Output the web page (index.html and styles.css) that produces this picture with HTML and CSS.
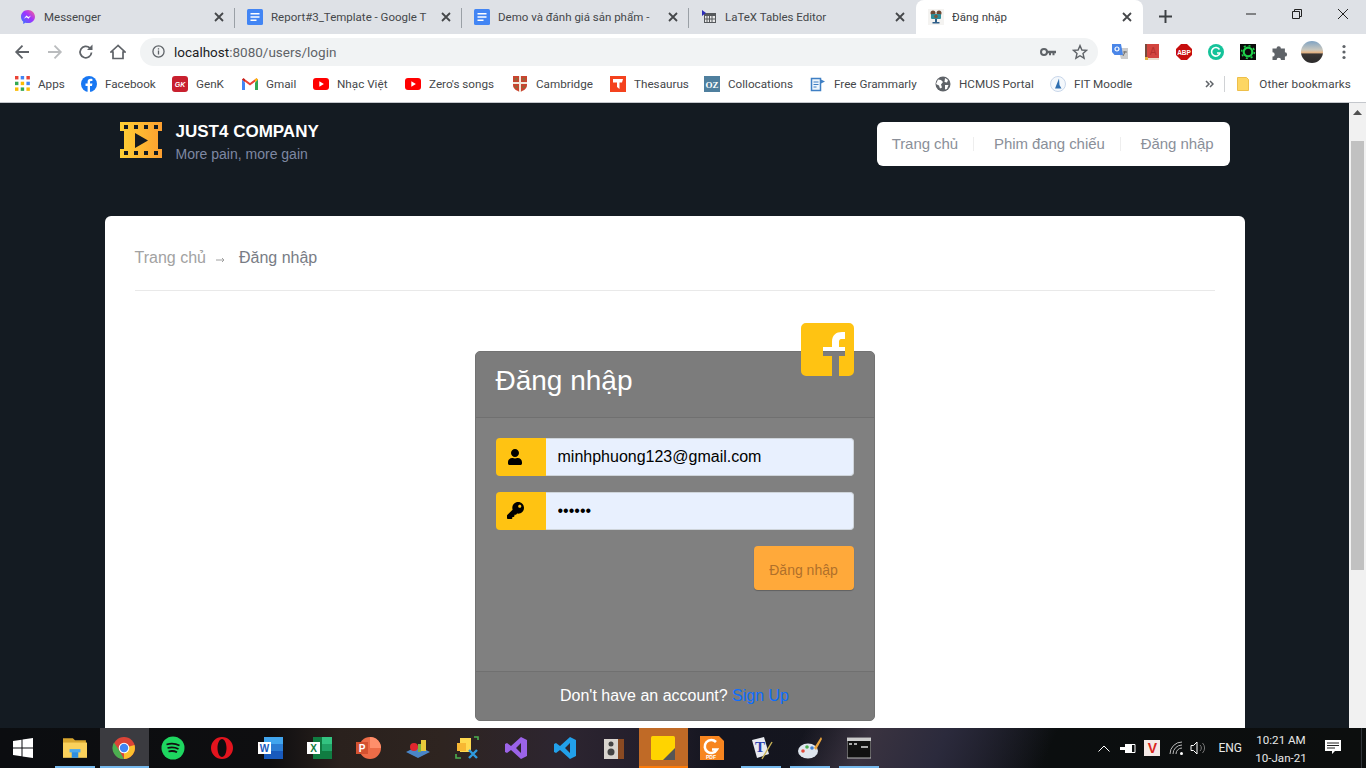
FILE: index.html
```html
<!DOCTYPE html>
<html>
  <head>
    <meta charset="UTF-8">
    <title>Đăng nhập</title>
    <link rel="stylesheet" href="styles.css">
  </head>
  <body>
    <svg class="defs" width="0" height="0">
      <symbol id="docs" viewBox="0 0 16 16">
        <rect width="16" height="16" rx="1.5" fill="#4285f4"/>
        <path d="M3.5 4h9v1.6h-9zM3.5 7.2h9v1.6h-9zM3.5 10.4h6v1.6h-6z" fill="#fff"/>
      </symbol>
      <symbol id="yt" viewBox="0 0 16 12">
        <rect width="16" height="12" rx="3" fill="#f00"/>
        <path d="M6.3 3.3l4.6 2.7-4.6 2.7z" fill="#fff"/>
      </symbol>
      <symbol id="close" viewBox="0 0 10 10">
        <path d="M1 1l8 8M9 1l-8 8" stroke="#45474a" stroke-width="1.8" fill="none"/>
      </symbol>
    </svg>

    <div class="tabstrip">
      <div class="tab">
        <svg class="favicon" viewBox="0 0 16 16"><defs><linearGradient id="msg" x1="0" y1="1" x2="1" y2="0"><stop offset="0" stop-color="#2f7bff"/><stop offset=".55" stop-color="#a033ff"/><stop offset="1" stop-color="#ff6a8a"/></linearGradient></defs><path d="M8 1C4 1 1 3.900 1 7.700c0 2 .8 3.700 2.200 4.900V15l2.200-1.200c.8.200 1.700.300 2.600.300 4 0 7-2.900 7-6.400S12 1 8 1z" fill="url(#msg)"/><path d="M3.800 9.800l2.600-3.300 2 1.500 2.700-1.500-2.600 3.300-2-1.500z" fill="#fff"/></svg>
        <span class="tab-title">Messenger</span>
        <svg class="tab-close"><use href="#close"/></svg>
      </div>
      <div class="tab">
        <svg class="favicon"><use href="#docs"/></svg>
        <span class="tab-title">Report#3_Template - Google T</span>
        <svg class="tab-close"><use href="#close"/></svg>
      </div>
      <div class="tab">
        <svg class="favicon"><use href="#docs"/></svg>
        <span class="tab-title">Demo và đánh giá sản phẩm -</span>
        <svg class="tab-close"><use href="#close"/></svg>
      </div>
      <div class="tab tab-last">
        <svg class="favicon" viewBox="0 0 16 16"><path d="M3 4h12v10H3z" fill="#55585c"/><path d="M4 7h10v6H4z" fill="#e8e8e8"/><path d="M6 7v6M8.500 7v6M11 7v6M4 10h10" stroke="#55585c"/><path d="M1 1l4 3-4 3z" fill="#2b2bb8"/></svg>
        <span class="tab-title">LaTeX Tables Editor</span>
        <svg class="tab-close"><use href="#close"/></svg>
      </div>
      <div class="tab tab-active">
        <svg class="favicon" viewBox="0 0 16 16"><rect width="16" height="16" fill="#f4f3f1"/><circle cx="5" cy="4" r="2.500" fill="#6e4a35"/><circle cx="11" cy="4" r="2.500" fill="#6e4a35"/><rect x="3" y="5" width="10" height="5" rx="1" fill="#2f8d9a"/><circle cx="8" cy="7.500" r="1.800" fill="#7a5a3c"/><path d="M7 10h2v3H7zM4.500 13h7v1.500h-7z" fill="#2f5f8a"/></svg>
        <span class="tab-title">Đăng nhập</span>
        <svg class="tab-close"><use href="#close"/></svg>
      </div>
      <svg class="new-tab" viewBox="0 0 12 12"><path d="M6 0v12M0 6h12" stroke="#3c4043" stroke-width="1.800"/></svg>
      <div class="win-controls">
        <div class="win-btn"><svg width="10" height="10"><path d="M0 5h10" stroke="#222"/></svg></div>
        <div class="win-btn"><svg width="10" height="10"><path d="M.5 2.500h7v7h-7zM2.500 2.500v-2h7v7h-2" stroke="#222" fill="none"/></svg></div>
        <div class="win-btn"><svg width="10" height="10"><path d="M0 0l10 10M10 0L0 10" stroke="#222"/></svg></div>
      </div>
    </div>

    <div class="toolbar">
      <svg class="nav-icon nav-back" viewBox="0 0 16 16"><path d="M15 8H2.500M8.500 1.700L2.200 8l6.300 6.300" stroke="#5f6368" stroke-width="1.800" fill="none"/></svg>
      <svg class="nav-icon nav-forward" viewBox="0 0 16 16"><path d="M1 8h12.500M7.500 1.700L13.800 8l-6.300 6.300" stroke="#babcbe" stroke-width="1.800" fill="none"/></svg>
      <svg class="nav-icon nav-reload" viewBox="0 0 16 16"><path d="M13.500 8.500A5.700 5.700 0 1 1 11.800 4" stroke="#5f6368" stroke-width="1.800" fill="none"/><path d="M9 6h5.500V.5z" fill="#5f6368"/></svg>
      <svg class="nav-icon nav-home" viewBox="0 0 16 16"><path d="M8 1.500L1 8h2v6.500h10V8h2z" stroke="#5f6368" stroke-width="1.700" fill="none"/></svg>
      <div class="omnibox">
        <svg class="omni-info" viewBox="0 0 14 14"><circle cx="7" cy="7" r="6" stroke="#5f6368" stroke-width="1.400" fill="none"/><path d="M6.300 6h1.400v4.300H6.300zM6.300 3.500h1.400v1.400H6.300z" fill="#5f6368"/></svg>
        <span class="url"><span class="url-host">localhost</span>:8080/users/login</span>
        <svg class="omni-key" viewBox="0 0 16 10"><circle cx="4" cy="5" r="3" stroke="#5f6368" stroke-width="2" fill="none"/><path d="M7 3.800h9v2.400h-1.500v2h-2v-2H11v2H9v-2H7z" fill="#5f6368"/></svg>
        <svg class="omni-star" viewBox="0 0 16 16"><path d="M8 1.600l1.900 4.400 4.700.4-3.600 3.100 1.100 4.700L8 11.700l-4.100 2.500L5 9.500 1.400 6.400l4.700-.4z" stroke="#5f6368" stroke-width="1.400" fill="none"/></svg>
      </div>
      <div class="extensions">
        <svg class="ext" viewBox="0 0 16 16"><path d="M6 4h10v11H9z" fill="#ccc"/><path d="M0 0h9l2 11H2.500L0 8z" fill="#4a86e8"/><circle cx="5" cy="5" r="2" stroke="#fff" stroke-width="1.200" fill="none"/><path d="M11 8h4M13 7v1l-2 4" stroke="#777"/></svg>
        <svg class="ext" viewBox="0 0 16 16"><path d="M1 0h14v14H1z" fill="#d2453f"/><path d="M1 14h14v2H1z" fill="#eadfce"/><path d="M1 0h2v14H1z" fill="#7a4a3c"/><path d="M1 13h3v3H1z" fill="#e3b341"/><text x="9" y="10.500" class="book-letter">A</text></svg>
        <svg class="ext" viewBox="0 0 16 16"><path d="M5 0h6l5 5v6l-5 5H5l-5-5V5z" fill="#c70d0d"/><text x="8" y="10.600" class="abp">ABP</text></svg>
        <svg class="ext" viewBox="0 0 16 16"><circle cx="8" cy="8" r="8" fill="#15c39a"/><path d="M11.500 5.500a4.300 4.300 0 1 0 .5 3.500H9" stroke="#fff" stroke-width="1.600" fill="none"/></svg>
        <svg class="ext" viewBox="0 0 16 16"><rect width="16" height="16" fill="#0b0b0b"/><circle cx="8" cy="8" r="4.300" stroke="#1fd14a" stroke-width="2.200" fill="none"/><circle cx="8" cy="8" r="6.400" stroke="#1fd14a" stroke-width="1.500" stroke-dasharray="2 3" fill="none"/></svg>
        <svg class="ext" viewBox="0 0 16 16"><path d="M.5 4.500h4a2.200 2.200 0 1 1 4.400 0h4v3.700a2.200 2.200 0 1 1 0 4.400V16H9a2.200 2.200 0 1 0-4.400 0H.5v-3.400a2.200 2.200 0 1 0 0-4.400z" fill="#5f6368"/></svg>
        <div class="avatar"></div>
        <svg class="ext-menu" viewBox="0 0 4 16"><circle cx="2" cy="2.500" r="1.600" fill="#5f6368"/><circle cx="2" cy="8" r="1.600" fill="#5f6368"/><circle cx="2" cy="13.500" r="1.600" fill="#5f6368"/></svg>
      </div>
    </div>

    <div class="bookmarks">
      <div class="bookmark w-apps">
        <svg class="mark" viewBox="0 0 14 14"><path d="M0 0h3v3H0z" fill="#ea4335"/><path d="M5 0h3v3H5z" fill="#4285f4"/><path d="M10 0h3v3h-3z" fill="#ea4335"/><path d="M0 5h3v3H0z" fill="#34a853"/><path d="M5 5h3v3H5z" fill="#fbbc05"/><path d="M10 5h3v3h-3z" fill="#4285f4"/><path d="M0 10h3v3H0z" fill="#fbbc05"/><path d="M5 10h3v3H5z" fill="#34a853"/><path d="M10 10h3v3h-3z" fill="#fbbc05"/></svg>
        <span class="apps-label">Apps</span>
      </div>
      <div class="bookmark w-fb">
        <svg class="mark" viewBox="0 0 16 16"><circle cx="8" cy="8" r="8" fill="#1877f2"/><path d="M9 16v-6h2l.4-2.400H9V6.200c0-.8.300-1.200 1.200-1.200h1.200V3c-.5-.1-1.100-.2-1.700-.2-1.900 0-3.100 1.100-3.100 3.200v1.600H4.500V10h2.100v6z" fill="#fff"/></svg>
        <span>Facebook</span>
      </div>
      <div class="bookmark w-genk">
        <svg class="mark" viewBox="0 0 16 16"><rect width="16" height="16" rx="3" fill="#c8202f"/><text x="8" y="10.500" class="genk">GK</text></svg>
        <span>GenK</span>
      </div>
      <div class="bookmark w-gmail">
        <svg class="mark" viewBox="0 0 16 12"><path d="M0 1.500V12h3V4.500z" fill="#4285f4"/><path d="M13 4.500V12h3V1.500z" fill="#34a853"/><path d="M0 1.500L8 7.500l8-6L14.500.2 8 5 1.500.2z" fill="#ea4335"/><path d="M0 1.500L3 4V1.200L1.500.2z" fill="#c5221f"/><path d="M13 1.200V4l3-2.500L14.500.2z" fill="#fbbc05"/></svg>
        <span>Gmail</span>
      </div>
      <div class="bookmark w-nhac">
        <svg class="mark"><use href="#yt"/></svg>
        <span>Nhạc Việt</span>
      </div>
      <div class="bookmark w-zero">
        <svg class="mark"><use href="#yt"/></svg>
        <span>Zero's songs</span>
      </div>
      <div class="bookmark w-camb">
        <svg class="mark" viewBox="0 0 14 16"><path d="M0 0h14v9c0 4-3.500 5.500-7 7-3.500-1.500-7-3-7-7z" fill="#c8452f"/><path d="M6 0h2v16H6zM0 6h14v2H0z" fill="#f2e8dc"/><path d="M2 2h2.500v2.500H2zM9.500 2H12v2.500H9.500zM2 10h2.500v2H2zM9.500 10H12v2H9.500z" fill="#8c6a3c"/></svg>
        <span>Cambridge</span>
      </div>
      <div class="bookmark w-thes">
        <svg class="mark" viewBox="0 0 16 16"><rect width="16" height="16" fill="#f4421e"/><path d="M3 3h10l-1 3.500H9.500V13L7 11V6.500H3z" fill="#fff"/></svg>
        <span>Thesaurus</span>
      </div>
      <div class="bookmark w-coll">
        <svg class="mark" viewBox="0 0 16 16"><rect width="16" height="16" fill="#4f7f9e"/><text x="8" y="11.500" class="oz">OZ</text></svg>
        <span>Collocations</span>
      </div>
      <div class="bookmark w-gram">
        <svg class="mark" viewBox="0 0 16 16"><path d="M1.500 2.500h9v12h-9z" stroke="#3f7fc4" stroke-width="1.500" fill="#eef5fb"/><path d="M3.500 6h5M3.500 8.500h5M3.500 11h3" stroke="#3f7fc4" stroke-width="1.200"/><path d="M10 3l5 2.500-5 2.500z" fill="#3f7fc4"/></svg>
        <span>Free Grammarly</span>
      </div>
      <div class="bookmark w-hcmus">
        <svg class="mark" viewBox="0 0 16 16"><circle cx="8" cy="8" r="7.500" fill="#5f6368"/><path d="M3 3.500l3 .5 2 2-2 2.500 1 3-2 1-1-3-3-1.500zM10 2l3 2-1 2.500-2.500-.5zM10 9h3.500l-1.500 4-2 .5z" fill="#fff"/></svg>
        <span>HCMUS Portal</span>
      </div>
      <div class="bookmark">
        <svg class="mark" viewBox="0 0 16 16"><circle cx="8" cy="8" r="7.500" stroke="#c9d7ea" fill="#f4f8fc"/><path d="M9 2.500L5 12.500h6.500L9.500 9z" fill="#2f6fb0"/></svg>
        <span>FIT Moodle</span>
      </div>
      <div class="bookmarks-end">
        <svg class="chevrons" viewBox="0 0 9 8"><path d="M1 1l3 3-3 3M5 1l3 3-3 3" stroke="#5f6368" stroke-width="1.500" fill="none"/></svg>
        <div class="bm-sep"></div>
        <svg class="folder" viewBox="0 0 12 14"><path d="M.5.500h9l2 2v11H.5z" fill="#fdd663" stroke="#eebf4a"/></svg>
        <span class="other-label">Other bookmarks</span>
      </div>
    </div>

    <div class="viewport">
      <div class="page">
        <div class="container">
          <header class="site-header">
            <div class="brand">
              <svg class="brand-logo" viewBox="0 0 42 36">
                <defs><linearGradient id="film"><stop offset="0" stop-color="#ffd034"/><stop offset="1" stop-color="#fd9f30"/></linearGradient></defs>
                <path fill="url(#film)" fill-rule="evenodd" d="M0 0h42v9h-4v18h4v9H0v-9h4V9H0zM4 3v4h4V3zM14 3v4h4V3zM24 3v4h4V3zM34 3v4h4V3zM4 29v4h4v-4zM14 29v4h4v-4zM24 29v4h4v-4zM34 29v4h4v-4zM15 11v15l13-7.500z"/>
              </svg>
              <div class="brand-text">
                <div class="brand-name">JUST4 COMPANY</div>
                <div class="brand-slogan">More pain, more gain</div>
              </div>
            </div>
            <nav class="site-nav">
              <a class="nav-link">Trang chủ</a>
              <a class="nav-link">Phim đang chiếu</a>
              <a class="nav-link">Đăng nhập</a>
            </nav>
          </header>

          <main class="content">
            <div class="breadcrumb">
              <span class="crumb">Trang chủ</span>
              <svg class="crumb-arrow" viewBox="0 0 9 6"><path d="M0 3h8M6 1l2 2-2 2" stroke="#a0a0a0" fill="none"/></svg>
              <span class="crumb-current">Đăng nhập</span>
            </div>

            <div class="login-card">
              <svg class="fb-square" viewBox="0 0 53 53"><path fill="#ffc312" fill-rule="evenodd" d="M5 0h43a5 5 0 0 1 5 5v43a5 5 0 0 1-5 5H38V33h6V24h-6v-4c0-2 0-4 3-4h3V9h-3c-6 0-10 3-10 10v5h-9v9h9v20H5a5 5 0 0 1-5-5V5a5 5 0 0 1 5-5z"/></svg>
              <div class="login-header">
                <h3 class="login-title">Đăng nhập</h3>
              </div>
              <div class="login-body">
                <div class="input-row">
                  <div class="input-icon">
                    <svg class="icon-user" viewBox="0 0 448 512"><path d="M224 256c70.700 0 128-57.300 128-128S294.700 0 224 0 96 57.300 96 128s57.300 128 128 128zm89.600 32h-16.700c-22.200 10.200-46.900 16-72.900 16s-50.600-5.800-72.900-16h-16.700C60.200 288 0 348.200 0 422.400V464c0 26.500 21.500 48 48 48h352c26.500 0 48-21.500 48-48v-41.600c0-74.200-60.200-134.400-134.400-134.400z"/></svg>
                  </div>
                  <input class="input" type="text" value="minhphuong123@gmail.com">
                </div>
                <div class="input-row">
                  <div class="input-icon">
                    <svg class="icon-key" viewBox="0 0 512 512"><path d="M512 176c0 97.200-78.800 176-176 176-11.200 0-22.200-1.100-32.800-3.100l-24 27A24 24 0 0 1 261.200 384H224v40c0 13.300-10.700 24-24 24h-40v40c0 13.300-10.700 24-24 24H24c-13.300 0-24-10.700-24-24v-78.100c0-6.300 2.500-12.400 7-16.900l161.800-161.800C163.100 213.800 160 195.300 160 176 160 78.800 238.800 0 336 0c97.500 0 176 78.500 176 176zM336 128c0 26.500 21.500 48 48 48s48-21.500 48-48-21.500-48-48-48-48 21.500-48 48z"/></svg>
                  </div>
                  <input class="input" type="password" value="123456">
                </div>
                <div class="login-actions">
                  <button class="login-btn">Đăng nhập</button>
                </div>
              </div>
              <div class="login-footer">Don't have an account? <a class="signup">Sign Up</a></div>
            </div>
          </main>
        </div>
      </div>
      <div class="scrollbar">
        <svg class="scroll-up" viewBox="0 0 9 5"><path d="M0 5l4.500-5L9 5z" fill="#505050"/></svg>
        <div class="scroll-thumb"></div>
      </div>
    </div>

    <div class="taskbar">
      <div class="start">
        <svg viewBox="0 0 20 20" width="20" height="20"><path d="M0 3l8.500-1.200V9.500H0zM9.500 1.600L20 0v9.500H9.500zM0 10.500h8.500v7.700L0 17zM9.500 10.500H20V20L9.500 18.400z" fill="#fff"/></svg>
      </div>
      <div class="slot slot-open">
        <svg viewBox="0 0 22 20" class="task-icon"><path d="M0 1h9l2 2h10v4H0z" fill="#d9a62e"/><path d="M0 5h22v14H0z" fill="#fbd15b"/><path d="M8 13h6v6H8z" fill="#2f8fe0"/><path d="M6 11h10v3H6z" fill="#4aa8ee"/></svg>
      </div>
      <div class="slot slot-active">
        <svg viewBox="0 0 24 24" class="task-icon"><circle cx="12" cy="12" r="11" fill="#db4437"/><path d="M12 12L22.500 9A11 11 0 0 1 12 23z" fill="#fbc02d"/><path d="M12 23A11 11 0 0 1 2 6.500L7 14z" fill="#4caf50"/><circle cx="12" cy="12" r="5.300" fill="#fff"/><circle cx="12" cy="12" r="4.200" fill="#4285f4"/></svg>
      </div>
      <div class="slot">
        <svg viewBox="0 0 24 24" class="task-icon"><circle cx="12" cy="12" r="11.500" fill="#1ed760"/><path d="M5.500 8.500c4.500-1.300 9-1 13 1M6.500 12c3.800-1 7.500-.8 11 1M7.500 15.500c3-.8 6-.6 8.500.8" stroke="#111" stroke-width="1.800" fill="none"/></svg>
      </div>
      <div class="slot">
        <svg viewBox="0 0 24 24" class="task-icon"><path fill="#e3141e" fill-rule="evenodd" d="M12 1a11 11 0 1 1 0 22 11 11 0 0 1 0-22zM12 3c-2.500 0-4.500 4-4.500 9s2 9 4.500 9 4.500-4 4.500-9-2-9-4.500-9z"/></svg>
      </div>
      <div class="slot">
        <svg viewBox="0 0 26 22" class="task-icon-wide"><path d="M6 0h19v22H6z" fill="#185abd"/><path d="M6 0h19v7H6z" fill="#41a5ee"/><path d="M6 7h19v7H6z" fill="#2b7cd3"/><rect y="5" width="13" height="12" fill="#fff"/><text x="6.500" y="14.500" class="doc-letter word">W</text></svg>
      </div>
      <div class="slot">
        <svg viewBox="0 0 26 22" class="task-icon-wide"><path d="M6 0h19v22H6z" fill="#107c41"/><path d="M15 0h10v7H15z" fill="#33c481"/><path d="M15 7h10v7H15z" fill="#21a366"/><rect y="5" width="13" height="12" fill="#fff"/><text x="6.500" y="14.500" class="doc-letter excel">X</text></svg>
      </div>
      <div class="slot">
        <svg viewBox="0 0 26 22" class="task-icon-wide"><circle cx="14" cy="11" r="11" fill="#ed6c47"/><path d="M14 0a11 11 0 0 1 11 11H14z" fill="#ff8f6b"/><rect y="5" width="12" height="12" fill="#d35230"/><text x="6" y="14.500" class="doc-letter ppt">P</text></svg>
      </div>
      <div class="slot">
        <svg viewBox="0 0 24 22" class="task-icon"><path d="M0 15l12-6 12 6-12 6z" fill="#4a86c8"/><circle cx="8" cy="10" r="4" fill="#e0262e"/><path d="M15 3h5v11h-5z" fill="#e8c93a"/><path d="M12 7h3v8h-3z" fill="#7cb342"/></svg>
      </div>
      <div class="slot">
        <svg viewBox="0 0 24 24" class="task-icon"><path d="M5 2h11v14H5z" fill="#ffd94f"/><path d="M2 7h9v8H2z" fill="#f7b733"/><path d="M14 14l8 8M22 14l-8 8" stroke="#2f9be0" stroke-width="2.400"/><path d="M1 18v4h5M23 4V1h-4" stroke="#4caf50" stroke-width="1.600" fill="none"/></svg>
      </div>
      <div class="slot">
        <svg viewBox="0 0 24 24" class="task-icon"><path d="M17 1l6 3v16l-6 3-10-9-4 3-2-1V8l2-1 4 3zM17 7l-5 5 5 5z" fill="#9b63e8" fill-rule="evenodd"/></svg>
      </div>
      <div class="slot">
        <svg viewBox="0 0 24 24" class="task-icon"><path d="M17 1l6 3v16l-6 3-10-9-4 3-2-1V8l2-1 4 3zM17 7l-5 5 5 5z" fill="#22a0ea" fill-rule="evenodd"/></svg>
      </div>
      <div class="slot">
        <svg viewBox="0 0 20 24" class="task-icon"><path d="M0 3h14v20H0z" fill="#d9d5cf"/><path d="M14 3h6v20h-6z" fill="#8a4a22"/><circle cx="7" cy="8" r="2.500" fill="#444"/><circle cx="7" cy="16" r="3.500" fill="#444"/></svg>
      </div>
      <div class="slot slot-sticky">
        <svg viewBox="0 0 22 22" class="task-icon"><rect width="22" height="22" rx="1.500" fill="#ffd400"/><path d="M22 11v11H11z" fill="#555"/></svg>
      </div>
      <div class="slot">
        <svg viewBox="0 0 24 24" class="task-icon"><path d="M0 0h19l5 5v19H0z" fill="#f7851f"/><path d="M16 6a6.500 6.500 0 1 0 1 7.500H12" stroke="#fff" stroke-width="2.600" fill="none"/><text x="11" y="23" class="foxit">PDF</text></svg>
      </div>
      <div class="slot">
        <svg viewBox="0 0 24 24" class="task-icon"><path d="M3 4l12-3 5 17-12 4z" fill="#e8eaf0"/><text x="11" y="16" class="tex-letter">T</text><path d="M23 6L13 23" stroke="#c9b458" stroke-width="1.400"/></svg>
      </div>
      <div class="slot">
        <svg viewBox="0 0 24 24" class="task-icon"><ellipse cx="10" cy="15" rx="10" ry="7.500" fill="#dfe6ee"/><circle cx="5" cy="15" r="1.800" fill="#e14b3b"/><circle cx="9" cy="11" r="1.800" fill="#4caf50"/><circle cx="14" cy="12" r="1.800" fill="#3f7fd0"/><path d="M23 1l-7 11 2 2 6-11z" fill="#e8a33d"/></svg>
      </div>
      <div class="slot">
        <svg viewBox="0 0 24 20" class="task-icon"><rect width="24" height="20" fill="#111" stroke="#bbb"/><path d="M0 0h24v3H0z" fill="#ccc"/><path d="M2 6h3M7 6h3M14 9h7" stroke="#ddd" stroke-width="1.400"/></svg>
      </div>

      <div class="tray">
        <svg class="tray-caret" viewBox="0 0 12 7"><path d="M.5 6.500L6 1l5.500 5.500" stroke="#fff" fill="none"/></svg>
        <svg class="tray-battery" viewBox="0 0 16 11"><path d="M5 1.500h10v8H5" stroke="#fff" fill="none"/><path d="M5 2h7v7H5zM0 4h5v3H0z" fill="#fff"/></svg>
        <div class="tray-v">V</div>
        <svg class="tray-wifi" viewBox="0 0 16 14"><path d="M1 13a12 12 0 0 1 12-12M4 13a9 9 0 0 1 9-9M7 13a6 6 0 0 1 6-6" stroke="#bbb" fill="none"/><circle cx="12.500" cy="12.500" r="1.500" fill="#fff"/></svg>
        <svg class="tray-volume" viewBox="0 0 17 14"><path d="M1 4.500h2.500L7 1v12L3.500 9.500H1z" stroke="#fff" fill="none"/><path d="M10 4a4 4 0 0 1 0 6M12.500 2a7 7 0 0 1 0 10" stroke="#777" fill="none"/></svg>
        <div class="tray-lang">ENG</div>
        <div class="clock">
          <div>10:21 AM</div>
          <div>10-Jan-21</div>
        </div>
        <svg class="tray-notif" viewBox="0 0 16 16"><path d="M0 0h16v11h-6l-3 3v-3H0z" fill="#fff"/><path d="M2 3h12M2 5.500h12M2 8h8" stroke="#222"/></svg>
        <div class="show-desktop"></div>
      </div>
    </div>
  </body>
</html>
```

FILE: styles.css
```css
* {
  box-sizing: border-box;
}

html, body {
  height: 100%;
}

body {
  margin: 0;
  display: flex;
  flex-direction: column;
  overflow: hidden;
  font-family: 'Liberation Sans', Arial, sans-serif;
}

.defs {
  display: none;
}

/* browser chrome */
.tabstrip {
  display: flex;
  flex: none;
  height: 34px;
  padding-left: 8px;
  background: #dee1e6;
  font-family: Roboto, 'Noto Sans', sans-serif;
  font-size: 11.500px;
  color: #45474a;
}

.tab {
  position: relative;
  display: flex;
  align-items: center;
  width: 227px;
  padding-left: 12px;
}

.tab::after {
  content: "";
  position: absolute;
  right: 0;
  top: 8px;
  height: 20px;
  width: 1px;
  background: #9aa0a6;
}

.tab-last::after, .tab-active::after {
  display: none;
}

.tab-active {
  background: #fff;
  border-radius: 8px 8px 0 0;
  color: #3c4043;
}

.favicon {
  width: 16px;
  height: 16px;
  flex: none;
}

.tab-title {
  width: 160px;
  margin-left: 8px;
  white-space: nowrap;
  overflow: hidden;
}

.tab-close {
  width: 10px;
  height: 10px;
  margin-left: 10px;
  flex: none;
}

.new-tab {
  width: 13px;
  height: 13px;
  margin: 10px 0 0 16px;
}

.win-controls {
  display: flex;
  margin-left: auto;
}

.win-btn {
  display: flex;
  align-items: center;
  justify-content: center;
  width: 46px;
  height: 28px;
}

.toolbar {
  display: flex;
  align-items: center;
  flex: none;
  height: 35px;
  background: #fff;
}

.nav-icon {
  width: 16px;
  height: 16px;
  flex: none;
}

.nav-back {
  margin-left: 14px;
}

.nav-forward {
  margin-left: 17px;
}

.nav-reload {
  margin-left: 15px;
}

.nav-home {
  margin-left: 16px;
}

.omnibox {
  display: flex;
  align-items: center;
  width: 958px;
  height: 28px;
  margin-left: 14px;
  padding: 0 10px 0 12px;
  background: #f1f3f4;
  border-radius: 14px;
}

.omni-info {
  width: 13px;
  height: 13px;
}

.url {
  margin-left: 9px;
  font-family: Roboto, 'Noto Sans', sans-serif;
  font-size: 13.500px;
  color: #5f6368;
}

.url-host {
  color: #202124;
}

.omni-key {
  width: 16px;
  height: 10px;
  margin-left: auto;
}

.omni-star {
  width: 16px;
  height: 16px;
  margin-left: 16px;
}

.extensions {
  display: flex;
  align-items: center;
  margin-left: 14px;
}

.ext {
  width: 16px;
  height: 16px;
  margin-right: 16px;
}

.avatar {
  width: 22px;
  height: 22px;
  margin-left: -3px;
  border-radius: 50%;
  background: linear-gradient(#7fa3c4 0, #c9c7bd 40%, #e9b98a 52%, #3a3634 60%, #2b2a2b 100%);
}

.ext-menu {
  width: 4px;
  height: 16px;
  margin-left: 19px;
}

.abp {
  font-family: 'Liberation Sans', sans-serif;
  font-size: 6.500px;
  font-weight: bold;
  fill: #fff;
  text-anchor: middle;
}

.book-letter {
  font-family: 'Liberation Sans', sans-serif;
  font-size: 10px;
  fill: #b5322d;
  text-anchor: middle;
}

.genk {
  font-family: 'Liberation Sans', sans-serif;
  font-size: 7px;
  font-weight: bold;
  font-style: italic;
  fill: #fff;
  text-anchor: middle;
}

.oz {
  font-family: 'Liberation Serif', serif;
  font-size: 9px;
  font-weight: bold;
  fill: #fff;
  text-anchor: middle;
}

.bookmarks {
  display: flex;
  align-items: center;
  flex: none;
  height: 34px;
  padding: 0 0 3px 15px;
  background: #fff;
  border-bottom: 1px solid #c4c7cc;
  font-family: Roboto, 'Noto Sans', sans-serif;
  font-size: 11.700px;
  color: #45474a;
  white-space: nowrap;
}

.bookmark {
  display: flex;
  align-items: center;
  flex: none;
}

.mark {
  width: 16px;
  height: 16px;
  margin-right: 8px;
  flex: none;
}

.apps-label {
  margin-left: -1px;
}

.w-apps { width: 66px; }
.w-fb { width: 91px; }
.w-genk { width: 70px; }
.w-gmail { width: 71px; }
.w-nhac { width: 92px; }
.w-zero { width: 107px; }
.w-camb { width: 98px; }
.w-thes { width: 94px; }
.w-coll { width: 106px; }
.w-gram { width: 125px; }
.w-hcmus { width: 115px; }

.bookmarks-end {
  display: flex;
  align-items: center;
  margin-left: auto;
  padding-right: 15px;
}

.other-label {
  letter-spacing: .13px;
}

.chevrons {
  width: 9px;
  height: 8px;
}

.bm-sep {
  width: 1px;
  height: 16px;
  margin: 0 12px 0 10px;
  background: #d0d2d5;
}

.folder {
  width: 12px;
  height: 14px;
  margin-right: 10px;
}

/* page */
.viewport {
  display: flex;
  flex: 1;
  min-height: 0;
}

.page {
  flex: 1;
  min-width: 0;
  overflow: hidden;
  background: #141b22;
}

.container {
  width: 1140px;
  margin: 0 auto;
}

.site-header {
  display: flex;
  justify-content: space-between;
  align-items: flex-start;
  padding: 19px 15px 0;
}

.brand {
  display: flex;
}

.brand-logo {
  width: 42px;
  height: 36px;
}

.brand-text {
  margin-left: 14px;
  padding-top: 1px;
}

.brand-name {
  font-size: 17px;
  font-weight: bold;
  line-height: 18px;
  color: #fff;
}

.brand-slogan {
  margin-top: 4px;
  font-size: 14px;
  line-height: 18px;
  color: #7e88a3;
}

.site-nav {
  display: flex;
  align-items: center;
  height: 44px;
  padding: 0 16px 0 15px;
  background: #fff;
  border-radius: 6px;
}

.nav-link {
  font-size: 15px;
  letter-spacing: -.07px;
  color: #8a8f99;
  padding: 0 15px 0 20px;
  border-right: 1px solid #eee;
  line-height: 14px;
}

.nav-link:first-child {
  padding-left: 0;
}

.nav-link:last-child {
  padding-right: 0;
  padding-left: 20px;
  border-right: 0;
}

.content {
  margin-top: 50px;
  padding: 30px 30px 30px;
  background: #fff;
  border-radius: 6px;
}

.breadcrumb {
  display: flex;
  align-items: center;
  padding-bottom: 20px;
  border-bottom: 1px solid #e9e9e9;
  font-size: 16px;
  line-height: 24px;
}

.crumb {
  color: #a2a2a2;
}

.crumb-arrow {
  width: 9px;
  height: 6px;
  margin: 4px 14px 0 10px;
}

.crumb-current {
  color: #787c85;
}

/* login card */
.login-card {
  position: relative;
  display: flex;
  flex-direction: column;
  width: 400px;
  height: 370px;
  margin: 60px auto 0;
  background: #808080;
  border: 1px solid #727272;
  border-radius: 5px;
}

.fb-square {
  position: absolute;
  top: -29px;
  right: 20px;
  width: 53px;
  height: 53px;
}

.login-header {
  padding: 12px 20px;
  background: #7c7c7c;
  border-bottom: 1px solid #707070;
  border-radius: 4px 4px 0 0;
}

.login-title {
  margin: 0 0 7px;
  font-size: 28px;
  font-weight: normal;
  line-height: 33.600px;
  color: #fff;
}

.login-body {
  flex: 1;
  padding: 20px;
}

.input-row {
  display: flex;
  height: 38px;
  margin-bottom: 16px;
}

.input-icon {
  display: flex;
  align-items: center;
  width: 50px;
  padding-left: 12px;
  flex: none;
  background: #ffc312;
  border-radius: 4px 0 0 4px;
}

.icon-user {
  width: 14px;
  height: 16px;
}

.icon-key {
  width: 17px;
  height: 17px;
  margin-left: -1px;
}

.input {
  flex: 1;
  min-width: 0;
  padding: 0 12px;
  background: #e8f0fe;
  border: 1px solid #ced4da;
  border-left: 0;
  border-radius: 0 4px 4px 0;
  font-family: 'Liberation Sans', Arial, sans-serif;
  font-size: 16px;
  color: #000;
  outline: none;
}

.login-actions {
  display: flex;
  justify-content: flex-end;
}

.login-btn {
  width: 100px;
  height: 44px;
  padding: 4px 0 0;
  background: #ffa93a;
  border: 0;
  border-radius: 4px;
  box-shadow: 0 1px 1px rgba(0, 0, 0, .25);
  font-family: 'Liberation Sans', Arial, sans-serif;
  font-size: 14px;
  color: #b0702a;
}

.login-footer {
  padding: 12px 20px;
  background: #7b7b7b;
  border-top: 1px solid #707070;
  border-radius: 0 0 4px 4px;
  font-size: 16px;
  line-height: 24px;
  color: #fff;
  text-align: center;
}

.signup {
  color: #0d6efd;
}

/* scrollbar */
.scrollbar {
  display: flex;
  flex-direction: column;
  align-items: center;
  width: 17px;
  flex: none;
  background: #f1f1f1;
}

.scroll-up {
  width: 9px;
  height: 5px;
  margin: 7px 0 26px;
}

.scroll-thumb {
  width: 13px;
  height: 429px;
  background: #c1c1c1;
}

/* taskbar */
.taskbar {
  display: flex;
  flex: none;
  height: 40px;
  color: #fff;
  background:
    linear-gradient(115deg, transparent 0, transparent 730px, #3a3340 790px, #2b2a3c 860px, transparent 960px),
    linear-gradient(90deg, #0b0d10 0, #0e0e10 270px, #2a211d 340px, #2e2420 440px, #2d2530 560px, #241f2c 640px, #14151f 720px, #15161e 950px, #0b0e0f 1050px, #0c0e0e 100%);
}

.start {
  display: flex;
  align-items: center;
  justify-content: center;
  width: 51px;
  padding-right: 5px;
  flex: none;
}

.slot {
  position: relative;
  display: flex;
  align-items: center;
  justify-content: center;
  width: 49px;
  padding-right: 2px;
  flex: none;
}

.task-icon {
  width: 24px;
  height: 24px;
}

.task-icon-wide {
  width: 26px;
  height: 22px;
}

.slot-open::after, .slot-active::after, .slot-sticky::after, .slot:nth-child(16)::after, .slot:nth-child(17)::after, .slot:nth-child(18)::after {
  content: "";
  position: absolute;
  left: 4px;
  right: 5px;
  bottom: 0;
  height: 2px;
  background: #76b9ed;
}

.slot-active {
  background: #3b3b40;
}

.slot-active::after {
  left: 0;
  right: 0;
}

.slot-sticky {
  background: #c06a26;
}

.slot-sticky::after {
  left: 0;
  right: 0;
  background: #f97b0c;
}

.doc-letter {
  font-family: 'Liberation Sans', sans-serif;
  font-size: 10px;
  font-weight: bold;
  text-anchor: middle;
}

.word {
  fill: #185abd;
}

.excel {
  fill: #107c41;
}

.ppt {
  fill: #fff;
}

.foxit {
  font-family: 'Liberation Sans', sans-serif;
  font-size: 5px;
  font-weight: bold;
  fill: #fff;
  text-anchor: middle;
}

.tex-letter {
  font-family: 'Liberation Serif', serif;
  font-size: 15px;
  font-weight: bold;
  fill: #2a3fb0;
  text-anchor: middle;
}

.tray {
  display: flex;
  align-items: center;
  margin-left: auto;
}

.tray-caret {
  width: 12px;
  height: 7px;
}

.tray-battery {
  width: 16px;
  height: 11px;
  margin-left: 10px;
}

.tray-v {
  width: 16px;
  height: 16px;
  margin-left: 8px;
  background: #f4e9e6;
  font-size: 14px;
  font-weight: bold;
  line-height: 16px;
  color: #d9261c;
  text-align: center;
}

.tray-wifi {
  width: 16px;
  height: 14px;
  margin-left: 9px;
}

.tray-volume {
  width: 17px;
  height: 14px;
  margin-left: 5px;
}

.tray-lang {
  margin-left: 11px;
  font-family: Roboto, sans-serif;
  font-size: 12px;
  color: #e8e8e8;
}

.clock {
  width: 70px;
  margin-left: 4px;
  padding-top: 1px;
  font-family: Roboto, sans-serif;
  font-size: 11.600px;
  line-height: 18px;
  color: #e8e8e8;
  text-align: center;
}

.tray-notif {
  width: 16px;
  height: 16px;
  margin-left: 9px;
}

.show-desktop {
  width: 1px;
  height: 40px;
  margin-left: 20px;
  margin-right: 4px;
  background: #30343a;
}
```
